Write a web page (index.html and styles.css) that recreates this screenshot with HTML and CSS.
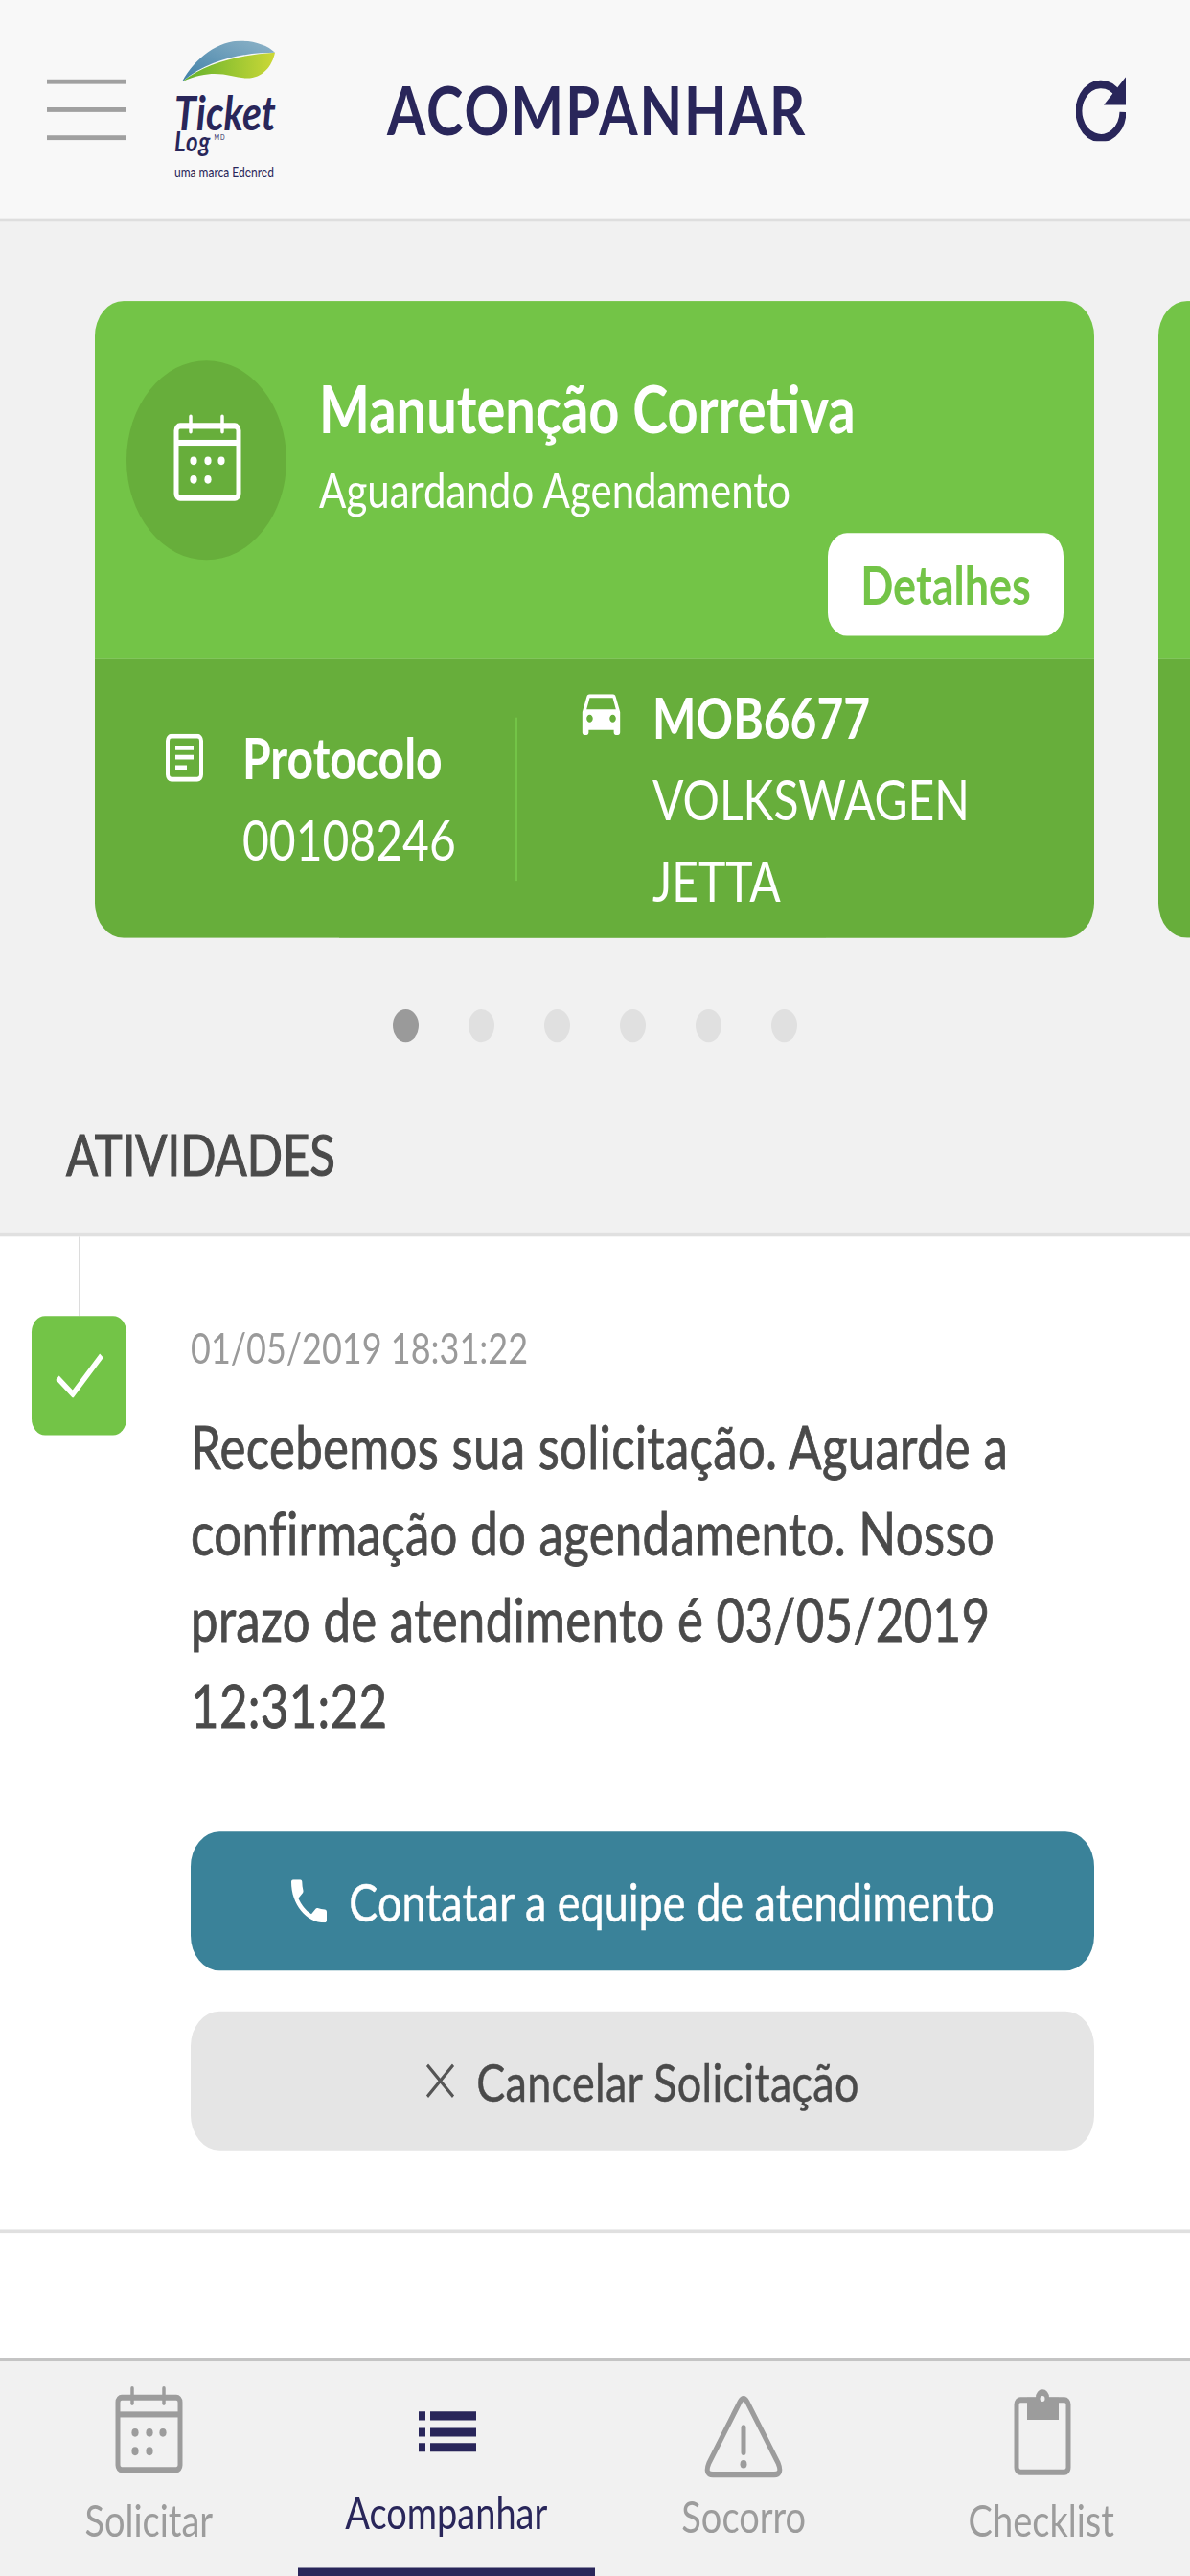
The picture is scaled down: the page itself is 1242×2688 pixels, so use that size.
FILE: index.html
```html
<!DOCTYPE html>
<html lang="pt-BR">
<head>
    <meta charset="UTF-8">
    <title>Acompanhar</title>
    <link rel="stylesheet" href="styles.css">
</head>
<body>

<svg class="defs" width="0" height="0">
    <symbol id="calendar" viewBox="0 0 100 95">
        <rect x="18" y="18" width="65" height="62" rx="4" fill="none" stroke="currentColor" stroke-width="5"/>
        <rect x="18" y="30" width="65" height="5" fill="currentColor"/>
        <path d="M33 10v13M66 10v13" stroke="currentColor" stroke-width="3.5" stroke-linecap="round"/>
        <circle cx="36" cy="48" r="3.6" fill="currentColor"/>
        <circle cx="51" cy="48" r="3.6" fill="currentColor"/>
        <circle cx="65" cy="48" r="3.6" fill="currentColor"/>
        <circle cx="36" cy="64" r="3.6" fill="currentColor"/>
        <circle cx="51" cy="64" r="3.6" fill="currentColor"/>
    </symbol>
</svg>

<div class="screen">
    <header class="topbar">
        <div class="burger"><span></span><span></span><span></span></div>
        <div class="logo">
            <svg class="logo-leaf" width="97" height="35" viewBox="0 0 97 35">
                <defs>
                    <linearGradient id="leafgreen" x1="0" x2="1" y1="0" y2="0">
                        <stop offset="0" stop-color="#5fb02c"/>
                        <stop offset="1" stop-color="#ccd837"/>
                    </linearGradient>
                    <linearGradient id="leafblue" x1="0" x2="1" y1="1" y2="0">
                        <stop offset="0" stop-color="#3f80a8"/>
                        <stop offset="1" stop-color="#8fb4c8"/>
                    </linearGradient>
                </defs>
                <path d="M0 35C14 14 38 0 62 0C76 0 90 4 97 10C70 10 30 14 0 35Z" fill="url(#leafblue)"/>
                <path d="M0 35C26 18 62 12 97 10C94 22 84 32 68 32C50 32 36 22 0 35Z" fill="url(#leafgreen)"/>
            </svg>
            <div class="logo-ticket">Ticket</div>
            <div class="logo-log">Log<sup>MD</sup></div>
            <div class="logo-sub">uma marca Edenred</div>
        </div>
        <h1 class="page-title">ACOMPANHAR</h1>
        <svg class="refresh" width="52" height="55" viewBox="0 0 52 55">
            <path d="M44 15A23 23 0 1 0 49 30" fill="none" stroke="#29265a" stroke-width="7"/>
            <path d="M52 0V24H29Z" fill="#29265a"/>
        </svg>
    </header>

    <section class="carousel">
        <div class="card">
            <div class="card-top">
                <div class="card-circle">
                    <svg class="white-icon" width="100" height="95"><use href="#calendar"/></svg>
                </div>
                <div class="card-info">
                    <div class="card-title">Manutenção Corretiva</div>
                    <div class="card-status">Aguardando Agendamento</div>
                    <div class="btn-details">Detalhes</div>
                </div>
            </div>
            <div class="card-bottom">
                <div class="protocol">
                    <svg class="doc-icon" width="39" height="41" viewBox="0 0 39 41">
                        <rect x="2" y="2" width="35" height="37" rx="4" fill="none" stroke="#fff" stroke-width="4"/>
                        <path d="M10 12H29M10 20H29M10 29H22" stroke="#fff" stroke-width="4"/>
                    </svg>
                    <div>
                        <div class="strong">Protocolo</div>
                        <div>00108246</div>
                    </div>
                </div>
                <div class="card-divider"></div>
                <div class="vehicle">
                    <svg class="car-icon" width="41" height="35" viewBox="3 5 18 16">
                        <path fill="#fff" d="M18.92 6.01C18.72 5.42 18.16 5 17.5 5h-11c-.66 0-1.21.42-1.42 1.01L3 12v8c0 .55.45 1 1 1h1c.55 0 1-.45 1-1v-1h12v1c0 .55.45 1 1 1h1c.55 0 1-.45 1-1v-8l-2.08-5.99zM6.5 16c-.83 0-1.5-.67-1.5-1.5S5.67 13 6.5 13s1.5.67 1.5 1.5S7.33 16 6.5 16zm11 0c-.83 0-1.5-.67-1.5-1.5s.67-1.5 1.5-1.5 1.5.67 1.5 1.5-.67 1.5-1.5 1.5zM5 11l1.5-4.5h11L19 11H5z"/>
                    </svg>
                    <div>
                        <div class="strong">MOB6677</div>
                        <div>VOLKSWAGEN</div>
                        <div>JETTA</div>
                    </div>
                </div>
            </div>
        </div>
        <div class="card">
            <div class="card-top"></div>
            <div class="card-bottom"></div>
        </div>
    </section>

    <div class="dots">
        <span class="dot active"></span>
        <span class="dot"></span>
        <span class="dot"></span>
        <span class="dot"></span>
        <span class="dot"></span>
        <span class="dot"></span>
    </div>

    <div class="section-head">ATIVIDADES</div>

    <main class="activities">
        <div class="activity">
            <div class="timeline">
                <div class="timeline-line"></div>
                <div class="timeline-box">
                    <svg width="50" height="38" viewBox="0 0 50 38">
                        <path d="M2 21L18 35L48 2" fill="none" stroke="#fff" stroke-width="5"/>
                    </svg>
                </div>
            </div>
            <div class="activity-body">
                <div class="activity-date">01/05/2019 18:31:22</div>
                <p class="activity-text">Recebemos sua solicitação. Aguarde a confirmação do agendamento. Nosso prazo de atendimento é 03/05/2019 12:31:22</p>
                <div class="btn btn-contact">
                    <svg width="39" height="37" viewBox="3 3 18 18">
                        <path fill="#fff" d="M6.62 10.79c1.44 2.83 3.76 5.14 6.59 6.59l2.2-2.2c.27-.27.67-.36 1.02-.24 1.12.37 2.33.57 3.57.57.55 0 1 .45 1 1V20c0 .55-.45 1-1 1-9.39 0-17-7.61-17-17 0-.55.45-1 1-1h3.5c.55 0 1 .45 1 1 0 1.25.2 2.45.57 3.57.11.35.03.74-.25 1.02l-2.2 2.2z"/>
                    </svg>
                    Contatar a equipe de atendimento
                </div>
                <div class="btn btn-cancel">
                    <svg width="31" height="29" viewBox="0 0 31 29">
                        <path d="M2 1L29 28M29 1L2 28" fill="none" stroke="#555" stroke-width="3"/>
                    </svg>
                    Cancelar Solicitação
                </div>
            </div>
        </div>
        <div class="activity-end"></div>
    </main>

    <nav class="tabbar">
        <div class="tab">
            <svg class="tab-icon" width="100" height="95"><use href="#calendar"/></svg>
            <span class="tab-label">Solicitar</span>
        </div>
        <div class="tab active">
            <svg class="tab-icon" width="100" height="95" viewBox="0 0 100 95">
                <path fill="#29265a" d="M21 30h7v7.5h-7zM33 30h48v7.5H33zM21 44h7v7.5h-7zM33 44h48v7.5H33zM21 57h7v7.5h-7zM33 57h48v7.5H33z"/>
            </svg>
            <span class="tab-label">Acompanhar</span>
        </div>
        <div class="tab sos">
            <svg class="tab-icon" width="100" height="95" viewBox="0 0 100 95">
                <path d="M46 22Q50 16 54 22L86 74Q91 84 82 84H18Q9 84 14 74Z" fill="none" stroke="currentColor" stroke-width="5"/>
                <path d="M50 44V65" stroke="currentColor" stroke-width="5" stroke-linecap="round"/>
                <circle cx="50" cy="75" r="3.5" fill="currentColor"/>
            </svg>
            <span class="tab-label">Socorro</span>
        </div>
        <div class="tab">
            <svg class="tab-icon" width="100" height="95" viewBox="0 0 100 95">
                <rect x="24" y="20" width="54" height="62" rx="4" fill="none" stroke="currentColor" stroke-width="5"/>
                <path d="M35 18H44A7 7 0 0 1 58 18H68V37H35Z" fill="currentColor"/>
                <circle cx="51" cy="19" r="2.5" fill="#f1f1f1"/>
            </svg>
            <span class="tab-label">Checklist</span>
        </div>
    </nav>
</div>

</body>
</html>
```

FILE: styles.css
```css
html, body {
    margin: 0;
    padding: 0;
    height: 100%;
    overflow: hidden;
    background: #f1f1f1;
    font-family: 'Lato', sans-serif;
}

.defs {
    position: absolute;
}

.screen {
    width: 1242px;
    height: 2208px;
    display: flex;
    flex-direction: column;
    transform: scaleY(1.2174);
    transform-origin: 0 0;
}

.topbar {
    height: 187px;
    flex: none;
    display: flex;
    align-items: center;
    padding: 0 67px 0 49px;
    background: #f8f8f8;
    border-bottom: 3px solid #dedede;
}

.burger {
    width: 83px;
    display: flex;
    flex-direction: column;
    gap: 20px;
}

.burger span {
    height: 4px;
    background: #a0a0a0;
}

.logo {
    width: 106px;
    margin: 3px 0 0 50px;
    color: #29265a;
    font-style: italic;
    font-weight: 700;
}

.logo-leaf {
    display: block;
    margin-left: 8px;
}

.logo-ticket {
    font-size: 41px;
    line-height: 32px;
    margin-top: 11px;
}

.logo-log {
    font-size: 24px;
    line-height: 16px;
    letter-spacing: 1px;
}

.logo-log sup {
    font-size: 6px;
    font-style: normal;
    font-weight: 400;
    vertical-align: 10px;
    line-height: 0;
    margin-left: 3px;
}

.logo-sub {
    margin-top: 11px;
    font-size: 12px;
    line-height: 16px;
    font-style: normal;
    font-weight: 400;
    white-space: nowrap;
}

.page-title {
    margin: 0 0 0 116px;
    font-size: 58px;
    font-weight: 700;
    letter-spacing: 2px;
    color: #29265a;
}

.refresh {
    margin-left: auto;
}

.carousel {
    display: flex;
    gap: 67px;
    padding: 68px 0 0 99px;
    overflow: hidden;
    flex: none;
}

.card {
    width: 1043px;
    height: 546px;
    flex: none;
    display: flex;
    flex-direction: column;
    border-radius: 30px;
    overflow: hidden;
    color: #fff;
    font-size: 48px;
}

.card-top {
    height: 307px;
    flex: none;
    display: flex;
    gap: 34px;
    box-sizing: border-box;
    padding: 51px 32px 0 33px;
    background: #73c447;
}

.card-circle {
    width: 167px;
    height: 171px;
    flex: none;
    border-radius: 50%;
    background: #67ae3b;
    display: flex;
    align-items: center;
    justify-content: center;
}

.white-icon {
    color: #fff;
}

.card-info {
    flex: 1;
    display: flex;
    flex-direction: column;
    padding-top: 6px;
}

.card-title {
    font-size: 56px;
    line-height: 70px;
    font-weight: 700;
}

.card-status {
    margin-top: 9px;
    font-size: 42px;
    line-height: 50px;
}

.btn-details {
    align-self: flex-end;
    margin-top: 13px;
    width: 246px;
    height: 88px;
    line-height: 88px;
    text-align: center;
    border-radius: 20px;
    background: #fff;
    color: #73c447;
    font-size: 45px;
    font-weight: 700;
}

.card-bottom {
    flex: 1;
    display: flex;
    align-items: center;
    background: #67ae3b;
    line-height: 70px;
}

.strong {
    font-weight: 700;
}

.protocol {
    width: 365px;
    margin-left: 74px;
    display: flex;
    gap: 41px;
}

.doc-icon {
    margin-top: 14px;
}

.card-divider {
    width: 2px;
    height: 140px;
    background: #73c447;
}

.vehicle {
    margin-left: 67px;
    display: flex;
    gap: 33px;
}

.car-icon {
    margin-top: 15px;
}

.dots {
    display: flex;
    justify-content: center;
    gap: 52px;
    margin-top: 61px;
    flex: none;
}

.dot {
    width: 27px;
    height: 28px;
    border-radius: 50%;
    background: #e0e0e0;
}

.dot.active {
    background: #9a9a9a;
}

.section-head {
    flex: none;
    height: 167px;
    box-sizing: border-box;
    display: flex;
    align-items: flex-end;
    padding: 0 0 38px 69px;
    font-size: 49px;
    line-height: 60px;
    -webkit-text-stroke: 1px #4a4a4a;
    color: #4a4a4a;
    border-bottom: 3px solid #e0e0e0;
}

.activities {
    flex: 1;
    background: #fff;
}

.activity {
    display: flex;
    gap: 67px;
    padding: 0 100px 68px 33px;
}

.timeline {
    width: 99px;
    flex: none;
    display: flex;
    flex-direction: column;
    align-items: center;
}

.timeline-line {
    width: 2px;
    height: 68px;
    background: #dcdcdc;
}

.timeline-box {
    width: 99px;
    height: 102px;
    border-radius: 14px;
    background: #73c447;
    display: flex;
    align-items: center;
    justify-content: center;
}

.activity-body {
    flex: 1;
    padding-top: 73px;
}

.activity-date {
    font-size: 36px;
    line-height: 44px;
    color: #9a9a9a;
}

.activity-text {
    margin: 26px 0 71px;
    font-size: 51px;
    line-height: 74px;
    letter-spacing: 0.3px;
    -webkit-text-stroke: 0.7px #4a4a4a;
    color: #4a4a4a;
}

.btn {
    height: 119px;
    display: flex;
    align-items: center;
    justify-content: center;
    gap: 22px;
    border-radius: 30px;
    font-size: 45px;
}

.btn-contact {
    background: #3a8299;
    color: #fff;
    margin-bottom: 35px;
    -webkit-text-stroke: 0.4px #fff;
}

.btn-cancel {
    background: #e5e5e5;
    color: #4a4a4a;
    letter-spacing: 0.3px;
    -webkit-text-stroke: 0.4px #4a4a4a;
}

.activity-end {
    height: 3px;
    background: #e0e0e0;
}

.tabbar {
    flex: none;
    height: 187px;
    box-sizing: border-box;
    display: grid;
    grid-template-columns: repeat(4, 1fr);
    background: #f1f1f1;
    border-top: 3px solid #c4c4c4;
}

.tab {
    display: flex;
    flex-direction: column;
    align-items: center;
    padding-top: 13px;
    color: #9c9c9c;
    box-sizing: border-box;
}

.tab-icon {
    flex: none;
}

.tab-label {
    margin-top: 5px;
    font-size: 38px;
    line-height: 44px;
}

.tab.active {
    color: #29265a;
    border-bottom: 7px solid #29265a;
}

.tab.active .tab-label {
    margin-top: -1px;
}

.tab.sos .tab-label {
    margin-top: 2px;
}
```
